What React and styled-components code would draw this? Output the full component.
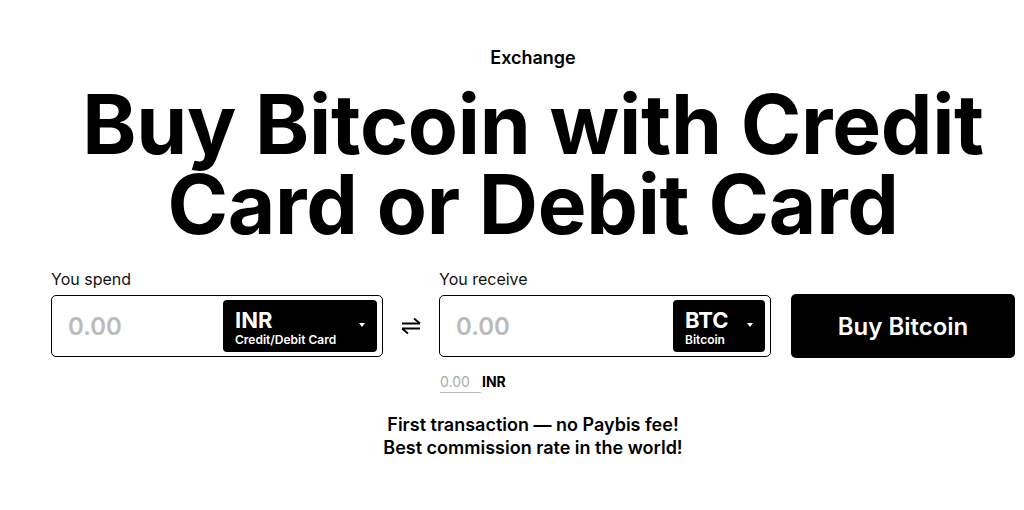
import styled, {createGlobalStyle} from "styled-components";

const GlobalStyle = createGlobalStyle`
    body {
        margin: 0;
        background: #fff;
        font-family: Inter, "Noto Sans", sans-serif;
        color: #000;
    }
`

const Page = styled.div`
    width: 964px;
    margin-left: 51px;
    padding-top: 46px;
    display: flex;
    flex-direction: column;
    align-items: center;
`

const Eyebrow = styled.div`
    font-size: 18px;
    font-weight: 600;
    line-height: 24px;
`

const Title = styled.h1`
    margin: 15px 0 0;
    font-size: 82px;
    line-height: 80px;
    font-weight: 700;
    letter-spacing: -0.3px;
    text-align: center;
`

const Form = styled.div`
    width: 100%;
    margin-top: 25px;
    display: flex;
    align-items: flex-end;
`

const Field = styled.div`
    display: flex;
    flex-direction: column;
    width: 332px;
    position: relative;
`

const Label = styled.label`
    font-size: 16px;
    line-height: 18px;
    margin-bottom: 7px;
    color: #111;
`

const Box = styled.div`
    height: 62px;
    box-sizing: border-box;
    border: 1px solid #000;
    border-radius: 5px;
    display: flex;
    align-items: center;
    justify-content: space-between;
    padding: 0 5px 0 16px;
`

const Amount = styled.input`
    border: none;
    outline: none;
    width: 120px;
    font-family: inherit;
    font-size: 24px;
    font-weight: 600;
    color: #bbb;
    background: transparent;
    padding: 0;

    &::placeholder {
        color: #bbb;
    }
`

const Currency = styled.button`
    width: ${({$w}) => $w}px;
    height: 52px;
    border: none;
    border-radius: 4px;
    background: #000;
    color: #fff;
    display: flex;
    align-items: center;
    justify-content: space-between;
    padding: 0 12px 0 12px;
    font-family: inherit;
    text-align: left;
    cursor: pointer;
`

const CurrencyText = styled.div`
    display: flex;
    flex-direction: column;
    padding-top: 2px;
`

const Code = styled.span`
    font-size: 22px;
    font-weight: 700;
    line-height: 24px;
`

const Method = styled.span`
    font-size: 12px;
    font-weight: 600;
    line-height: 15px;
`

const Caret = styled.span`
    width: 0;
    height: 0;
    border-left: 3.5px solid transparent;
    border-right: 3.5px solid transparent;
    border-top: 4px solid #fff;
    margin-bottom: 2px;
`

const Swap = styled.div`
    width: 56px;
    height: 62px;
    display: flex;
    align-items: center;
    justify-content: center;
`

const BuyButton = styled.button`
    margin-left: 20px;
    width: 224px;
    height: 64px;
    margin-bottom: -1px;
    border: none;
    border-radius: 5px;
    background: #000;
    color: #fff;
    font-family: inherit;
    font-size: 24px;
    font-weight: 600;
    cursor: pointer;
`

const Rate = styled.div`
    position: absolute;
    top: 100%;
    left: 1px;
    margin-top: 16px;
    display: flex;
    font-size: 14px;
    line-height: 18px;
`

const RateValue = styled.span`
    color: #aaa;
    border-bottom: 1px solid #bbb;
    padding-bottom: 1px;
    width: 41px;
`

const RateCode = styled.span`
    font-weight: 700;
    margin-left: 1px;
`

const Promo = styled.div`
    margin-top: 56px;
    font-size: 18px;
    font-weight: 600;
    line-height: 23px;
    text-align: center;
`

const SwapIcon = () => (
    <svg width="22" height="20" viewBox="0 0 22 20" fill="none" stroke="#000" strokeWidth="1.8">
        <path d="M2 7.5h18M14 2.5l6 5"/>
        <path d="M20 12.5H2M8 17.5l-6-5"/>
    </svg>
)

export default function App() {
    return (
        <>
            <GlobalStyle/>
            <Page>
                <Eyebrow>Exchange</Eyebrow>
                <Title>Buy Bitcoin with Credit<br/>Card or Debit Card</Title>

                <Form>
                    <Field>
                        <Label>You spend</Label>
                        <Box>
                            <Amount placeholder="0.00"/>
                            <Currency $w={154}>
                                <CurrencyText>
                                    <Code>INR</Code>
                                    <Method>Credit/Debit Card</Method>
                                </CurrencyText>
                                <Caret/>
                            </Currency>
                        </Box>
                    </Field>

                    <Swap><SwapIcon/></Swap>

                    <Field>
                        <Label>You receive</Label>
                        <Box>
                            <Amount placeholder="0.00"/>
                            <Currency $w={92}>
                                <CurrencyText>
                                    <Code>BTC</Code>
                                    <Method>Bitcoin</Method>
                                </CurrencyText>
                                <Caret/>
                            </Currency>
                        </Box>
                        <Rate>
                            <RateValue>0.00</RateValue>
                            <RateCode>INR</RateCode>
                        </Rate>
                    </Field>

                    <BuyButton>Buy Bitcoin</BuyButton>
                </Form>

                <Promo>
                    First transaction — no Paybis fee!<br/>
                    Best commission rate in the world!
                </Promo>
            </Page>
        </>
    )
}
